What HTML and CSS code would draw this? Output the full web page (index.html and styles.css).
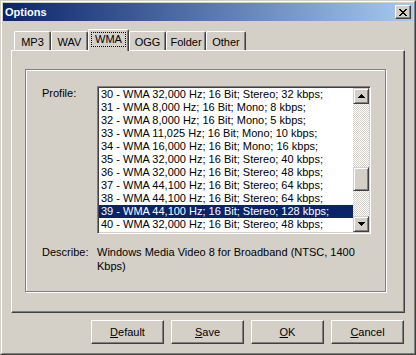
FILE: index.html
```html
<!DOCTYPE html>
<html>
<head>
<meta charset="utf-8">
<title>Options</title>
<link rel="stylesheet" href="styles.css">
</head>
<body>
<div class="window">
  <div class="frame">
    <div class="titlebar">
      <span class="title">Options</span>
      <div class="close">
        <svg width="8" height="7" viewBox="0 0 8 7" shape-rendering="crispEdges">
          <rect x="0" y="0" width="2" height="1"/><rect x="6" y="0" width="2" height="1"/>
          <rect x="1" y="1" width="2" height="1"/><rect x="5" y="1" width="2" height="1"/>
          <rect x="2" y="2" width="4" height="1"/>
          <rect x="3" y="3" width="2" height="1"/>
          <rect x="2" y="4" width="4" height="1"/>
          <rect x="1" y="5" width="2" height="1"/><rect x="5" y="5" width="2" height="1"/>
          <rect x="0" y="6" width="2" height="1"/><rect x="6" y="6" width="2" height="1"/>
        </svg>
      </div>
    </div>
    <div class="content">
      <div class="tabs">
        <div class="tab t37">MP3</div>
        <div class="tab t37">WAV</div>
        <div class="tab active"><span class="focus">WMA</span></div>
        <div class="tab t37">OGG</div>
        <div class="tab t40">Folder</div>
        <div class="tab t40">Other</div>
      </div>
      <div class="panel">
        <div class="group">
          <div class="label">Profile:</div>
          <div class="listbox">
            <div class="items">
              <div class="item">30 - WMA 32,000 Hz; 16 Bit; Stereo; 32 kbps;</div>
              <div class="item">31 - WMA 8,000 Hz; 16 Bit; Mono; 8 kbps;</div>
              <div class="item">32 - WMA 8,000 Hz; 16 Bit; Mono; 5 kbps;</div>
              <div class="item">33 - WMA 11,025 Hz; 16 Bit; Mono; 10 kbps;</div>
              <div class="item">34 - WMA 16,000 Hz; 16 Bit; Mono; 16 kbps;</div>
              <div class="item">35 - WMA 32,000 Hz; 16 Bit; Stereo; 40 kbps;</div>
              <div class="item">36 - WMA 32,000 Hz; 16 Bit; Stereo; 48 kbps;</div>
              <div class="item">37 - WMA 44,100 Hz; 16 Bit; Stereo; 64 kbps;</div>
              <div class="item">38 - WMA 44,100 Hz; 16 Bit; Stereo; 64 kbps;</div>
              <div class="item selected">39 - WMA 44,100 Hz; 16 Bit; Stereo; 128 kbps;</div>
              <div class="item">40 - WMA 32,000 Hz; 16 Bit; Stereo; 48 kbps;</div>
            </div>
            <div class="scrollbar">
              <div class="sbtn">
                <svg width="7" height="4" viewBox="0 0 7 4" shape-rendering="crispEdges">
                  <rect x="3" y="0" width="1" height="1"/><rect x="2" y="1" width="3" height="1"/>
                  <rect x="1" y="2" width="5" height="1"/><rect x="0" y="3" width="7" height="1"/>
                </svg>
              </div>
              <div class="track"><div class="thumb"></div></div>
              <div class="sbtn">
                <svg width="7" height="4" viewBox="0 0 7 4" shape-rendering="crispEdges">
                  <rect x="0" y="0" width="7" height="1"/><rect x="1" y="1" width="5" height="1"/>
                  <rect x="2" y="2" width="3" height="1"/><rect x="3" y="3" width="1" height="1"/>
                </svg>
              </div>
            </div>
          </div>
          <div class="label">Describe:</div>
          <div class="desc">Windows Media Video 8 for Broadband (NTSC, 1400 Kbps)</div>
        </div>
      </div>
      <div class="buttons">
        <div class="btn"><u>D</u>efault</div>
        <div class="btn"><u>S</u>ave</div>
        <div class="btn"><u>O</u>K</div>
        <div class="btn"><u>C</u>ancel</div>
      </div>
    </div>
  </div>
</div>
</body>
</html>
```
FILE: styles.css
```css
* { box-sizing: border-box; }
html, body { margin: 0; padding: 0; }
body {
  background: #d4d0c8;
  font-family: "Liberation Sans", Arial, sans-serif;
  font-size: 11px;
  color: #000;
  width: 416px;
  height: 355px;
  overflow: hidden;
}
.window {
  width: 416px;
  height: 355px;
  border: 1px solid;
  border-color: #d4d0c8 #404040 #404040 #d4d0c8;
  background: #d4d0c8;
}
.frame {
  height: 100%;
  border: 1px solid;
  border-color: #fff #808080 #808080 #fff;
  padding: 1px;
  display: flex;
  flex-direction: column;
}
.titlebar {
  height: 18px;
  flex: none;
  background: linear-gradient(to right, #0a246a, #a6caf0);
  display: flex;
  align-items: center;
  padding: 0 2px 0 2px;
}
.title {
  flex: 1;
  color: #fff;
  font-weight: bold;
  font-size: 11px;
  line-height: 18px;
}
.close {
  width: 16px;
  height: 14px;
  background: #d4d0c8;
  border: 1px solid;
  border-color: #fff #404040 #404040 #fff;
  box-shadow: inset -1px -1px 0 #808080;
  display: flex;
  align-items: center;
  justify-content: center;
}
.close svg { fill: #000; display: block; }
.content {
  flex: 1;
  padding: 8px 8px 0 8px;
  display: flex;
  flex-direction: column;
}
.tabs {
  height: 21px;
  display: flex;
  align-items: flex-end;
  padding-left: 3px;
}
.tab {
  height: 19px;
  border-top: 1px solid #fff;
  border-left: 1px solid #fff;
  border-right: 1px solid #404040;
  border-radius: 2px 2px 0 0;
  box-shadow: inset -1px 0 0 #808080;
  display: flex;
  align-items: center;
  justify-content: center;
  padding-top: 2px;
  background: #d4d0c8;
}
.t37 { width: 37px; }
.t40 { width: 40px; }
.tab.active {
  width: 41px;
  height: 22px;
  margin-bottom: -1px;
  position: relative;
  z-index: 1;
  padding-top: 0;
  padding-bottom: 2px;
}
.focus {
  border: 1px dotted #000;
  padding: 0 3px;
  line-height: 13px;
}
.panel {
  width: 394px;
  height: 263px;
  flex: none;
  border: 1px solid;
  border-color: #fff #404040 #404040 #fff;
  box-shadow: inset -1px -1px 0 #808080;
  padding: 18px 0 0 13px;
}
.group {
  width: 361px;
  height: 223px;
  border: 1px solid #808080;
  box-shadow: 1px 1px 0 #fff, inset 1px 1px 0 #fff;
  padding: 16px 0 0 16px;
  display: grid;
  grid-template-columns: 55px 274px;
  grid-template-rows: auto auto;
  row-gap: 11px;
  align-content: start;
}
.label { line-height: 14px; }
.listbox {
  height: 148px;
  border: 1px solid;
  border-color: #808080 #fff #fff #808080;
  box-shadow: inset 1px 1px 0 #404040, inset -1px -1px 0 #d4d0c8;
  padding: 1px;
  display: flex;
  background: #fff;
}
.items {
  flex: 1;
  overflow: hidden;
  background: #fff;
}
.item {
  height: 13px;
  line-height: 13px;
  padding-left: 2px;
  white-space: nowrap;
}
.item.selected {
  background: #0a246a;
  color: #fff;
}
.scrollbar {
  width: 16px;
  display: flex;
  flex-direction: column;
}
.sbtn, .thumb {
  background: #d4d0c8;
  border: 1px solid;
  border-color: #d4d0c8 #404040 #404040 #d4d0c8;
  box-shadow: inset 1px 1px 0 #fff, inset -1px -1px 0 #808080;
}
.sbtn {
  height: 16px;
  flex: none;
  display: flex;
  align-items: center;
  justify-content: center;
}
.sbtn svg { fill: #000; display: block; }
.track {
  flex: 1;
  background: repeating-conic-gradient(#d4d0c8 0 25%, #fff 0 50%) 0 0 / 2px 2px;
}
.thumb {
  margin-top: 63px;
  height: 24px;
}
.desc { line-height: 14px; }
.buttons {
  display: flex;
  justify-content: flex-end;
  gap: 7px;
  margin-top: 7px;
  padding-right: 1px;
}
.btn {
  width: 73px;
  height: 24px;
  border: 1px solid;
  border-color: #fff #404040 #404040 #fff;
  box-shadow: inset -1px -1px 0 #808080;
  background: #d4d0c8;
  display: flex;
  align-items: center;
  justify-content: center;
}
.btn u { text-decoration-thickness: 1px; text-underline-offset: 1px; }
```
